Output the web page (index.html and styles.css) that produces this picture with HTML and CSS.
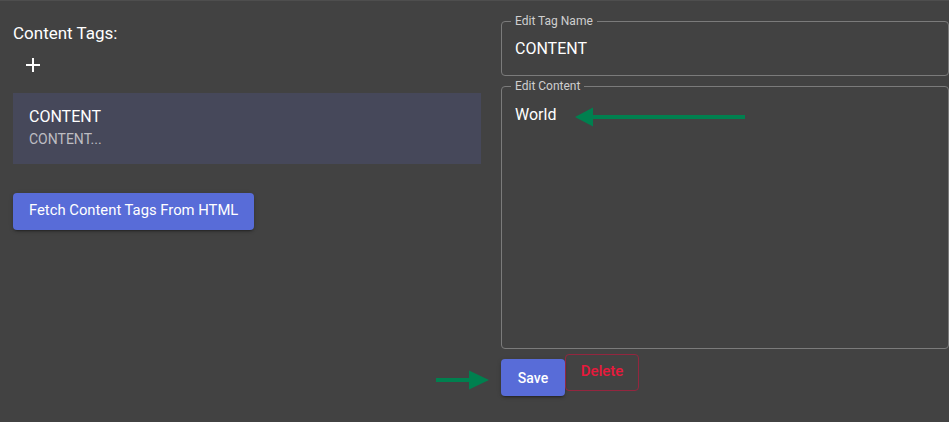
FILE: index.html
```html
<!DOCTYPE html>
<html>
<head>
<meta charset="utf-8">
<link rel="stylesheet" href="styles.css">
</head>
<body>
<div class="page">
  <div class="left">
    <div class="title">Content Tags:</div>
    <button class="icon-btn" aria-label="add">
      <svg width="24" height="24" viewBox="0 0 24 24"><path d="M19 13h-6v6h-2v-6H5v-2h6V5h2v6h6v2z" fill="#fff"/></svg>
    </button>
    <div class="card">
      <div class="card-title">CONTENT</div>
      <div class="card-sub">CONTENT...</div>
    </div>
    <button class="btn primary fetch">Fetch Content Tags From HTML</button>
  </div>
  <div class="right">
    <fieldset class="field name">
      <legend>Edit Tag Name</legend>
      <div class="value">CONTENT</div>
    </fieldset>
    <fieldset class="field content">
      <legend>Edit Content</legend>
      <div class="value">World</div>
    </fieldset>
    <div class="actions">
      <button class="btn primary save">Save</button>
      <button class="btn outline-danger delete">Delete</button>
    </div>
  </div>
  <svg class="arrow arrow-world" width="172" height="20" viewBox="0 0 172 20"><path d="M0 10 L18 0.5 L18 8 L170 8 L170 12 L18 12 L18 19.5 Z" fill="#00804f"/></svg>
  <svg class="arrow arrow-save" width="54" height="20" viewBox="0 0 54 20"><path d="M53 10 L33 0.5 L33 8 L0 8 L0 12 L33 12 L33 19.5 Z" fill="#00804f"/></svg>
</div>
</body>
</html>
```
FILE: styles.css
```css
html, body {
  margin: 0;
  padding: 0;
  background: #424242;
  font-family: Roboto, "Liberation Sans", sans-serif;
  color: #fff;
}
.page {
  position: relative;
  display: flex;
  gap: 20px;
  padding-left: 13px;
  height: 421px;
  border-top: 1px solid #4e4e4e;
  box-sizing: border-box;
}
.left {
  width: 468px;
  padding-top: 20px;
  display: flex;
  flex-direction: column;
  align-items: flex-start;
}
.title {
  font-size: 17px;
  line-height: 24px;
}
.icon-btn {
  width: 40px;
  height: 40px;
  padding: 8px;
  border: 0;
  background: transparent;
  display: flex;
  align-items: center;
  justify-content: center;
}
.card {
  margin-top: 8px;
  align-self: stretch;
  background: #46485a;
  padding: 12px 16px 15px;
}
.card-title {
  font-size: 16px;
  line-height: 24px;
}
.card-sub {
  font-size: 14px;
  line-height: 20px;
  color: #bdbdc2;
}
.btn {
  font-family: Roboto, "Liberation Sans", sans-serif;
  font-weight: 500;
  font-size: 14px;
  border-radius: 4px;
  cursor: pointer;
}
.primary {
  background: #586cd8;
  color: #fff;
  border: 0;
  box-shadow: 0 3px 1px -2px rgba(0,0,0,0.2), 0 2px 2px 0 rgba(0,0,0,0.14), 0 1px 5px 0 rgba(0,0,0,0.12);
}
.fetch {
  margin-top: 29px;
  height: 37px;
  padding: 0 16px 3px;
  font-size: 14.8px;
  font-weight: 400;
}
.right {
  width: 448px;
  padding-top: 12px;
  display: flex;
  flex-direction: column;
}
.field {
  margin: 0;
  border: 1px solid #7b7b7b;
  border-radius: 4px;
  padding: 0 12px 0 9px;
  min-inline-size: 0;
}
.field legend {
  font-size: 12px;
  line-height: 16px;
  color: #cfcfcf;
  padding: 0 4px;
}
.field .value {
  font-size: 16px;
  line-height: 24px;
  padding-left: 4px;
  padding-top: 8px;
}
.name {
  padding-bottom: 14px;
}
.content {
  margin-top: 2px;
  height: 271px;
  box-sizing: border-box;
}
.content .value {
  padding-top: 9px;
}
.actions {
  display: flex;
  align-items: flex-start;
  margin-top: 5px;
}
.save {
  margin-top: 5px;
  width: 64px;
  height: 37px;
  padding: 0;
}
.outline-danger {
  background: transparent;
  border: 1px solid #93263f;
  color: #e8193c;
  font-size: 15px;
  font-weight: 500;
  width: 74px;
  height: 37px;
  padding: 0 0 4px;
}
.arrow {
  position: absolute;
}
.arrow-world {
  left: 575px;
  top: 106px;
}
.arrow-save {
  left: 436px;
  top: 369px;
}
```
